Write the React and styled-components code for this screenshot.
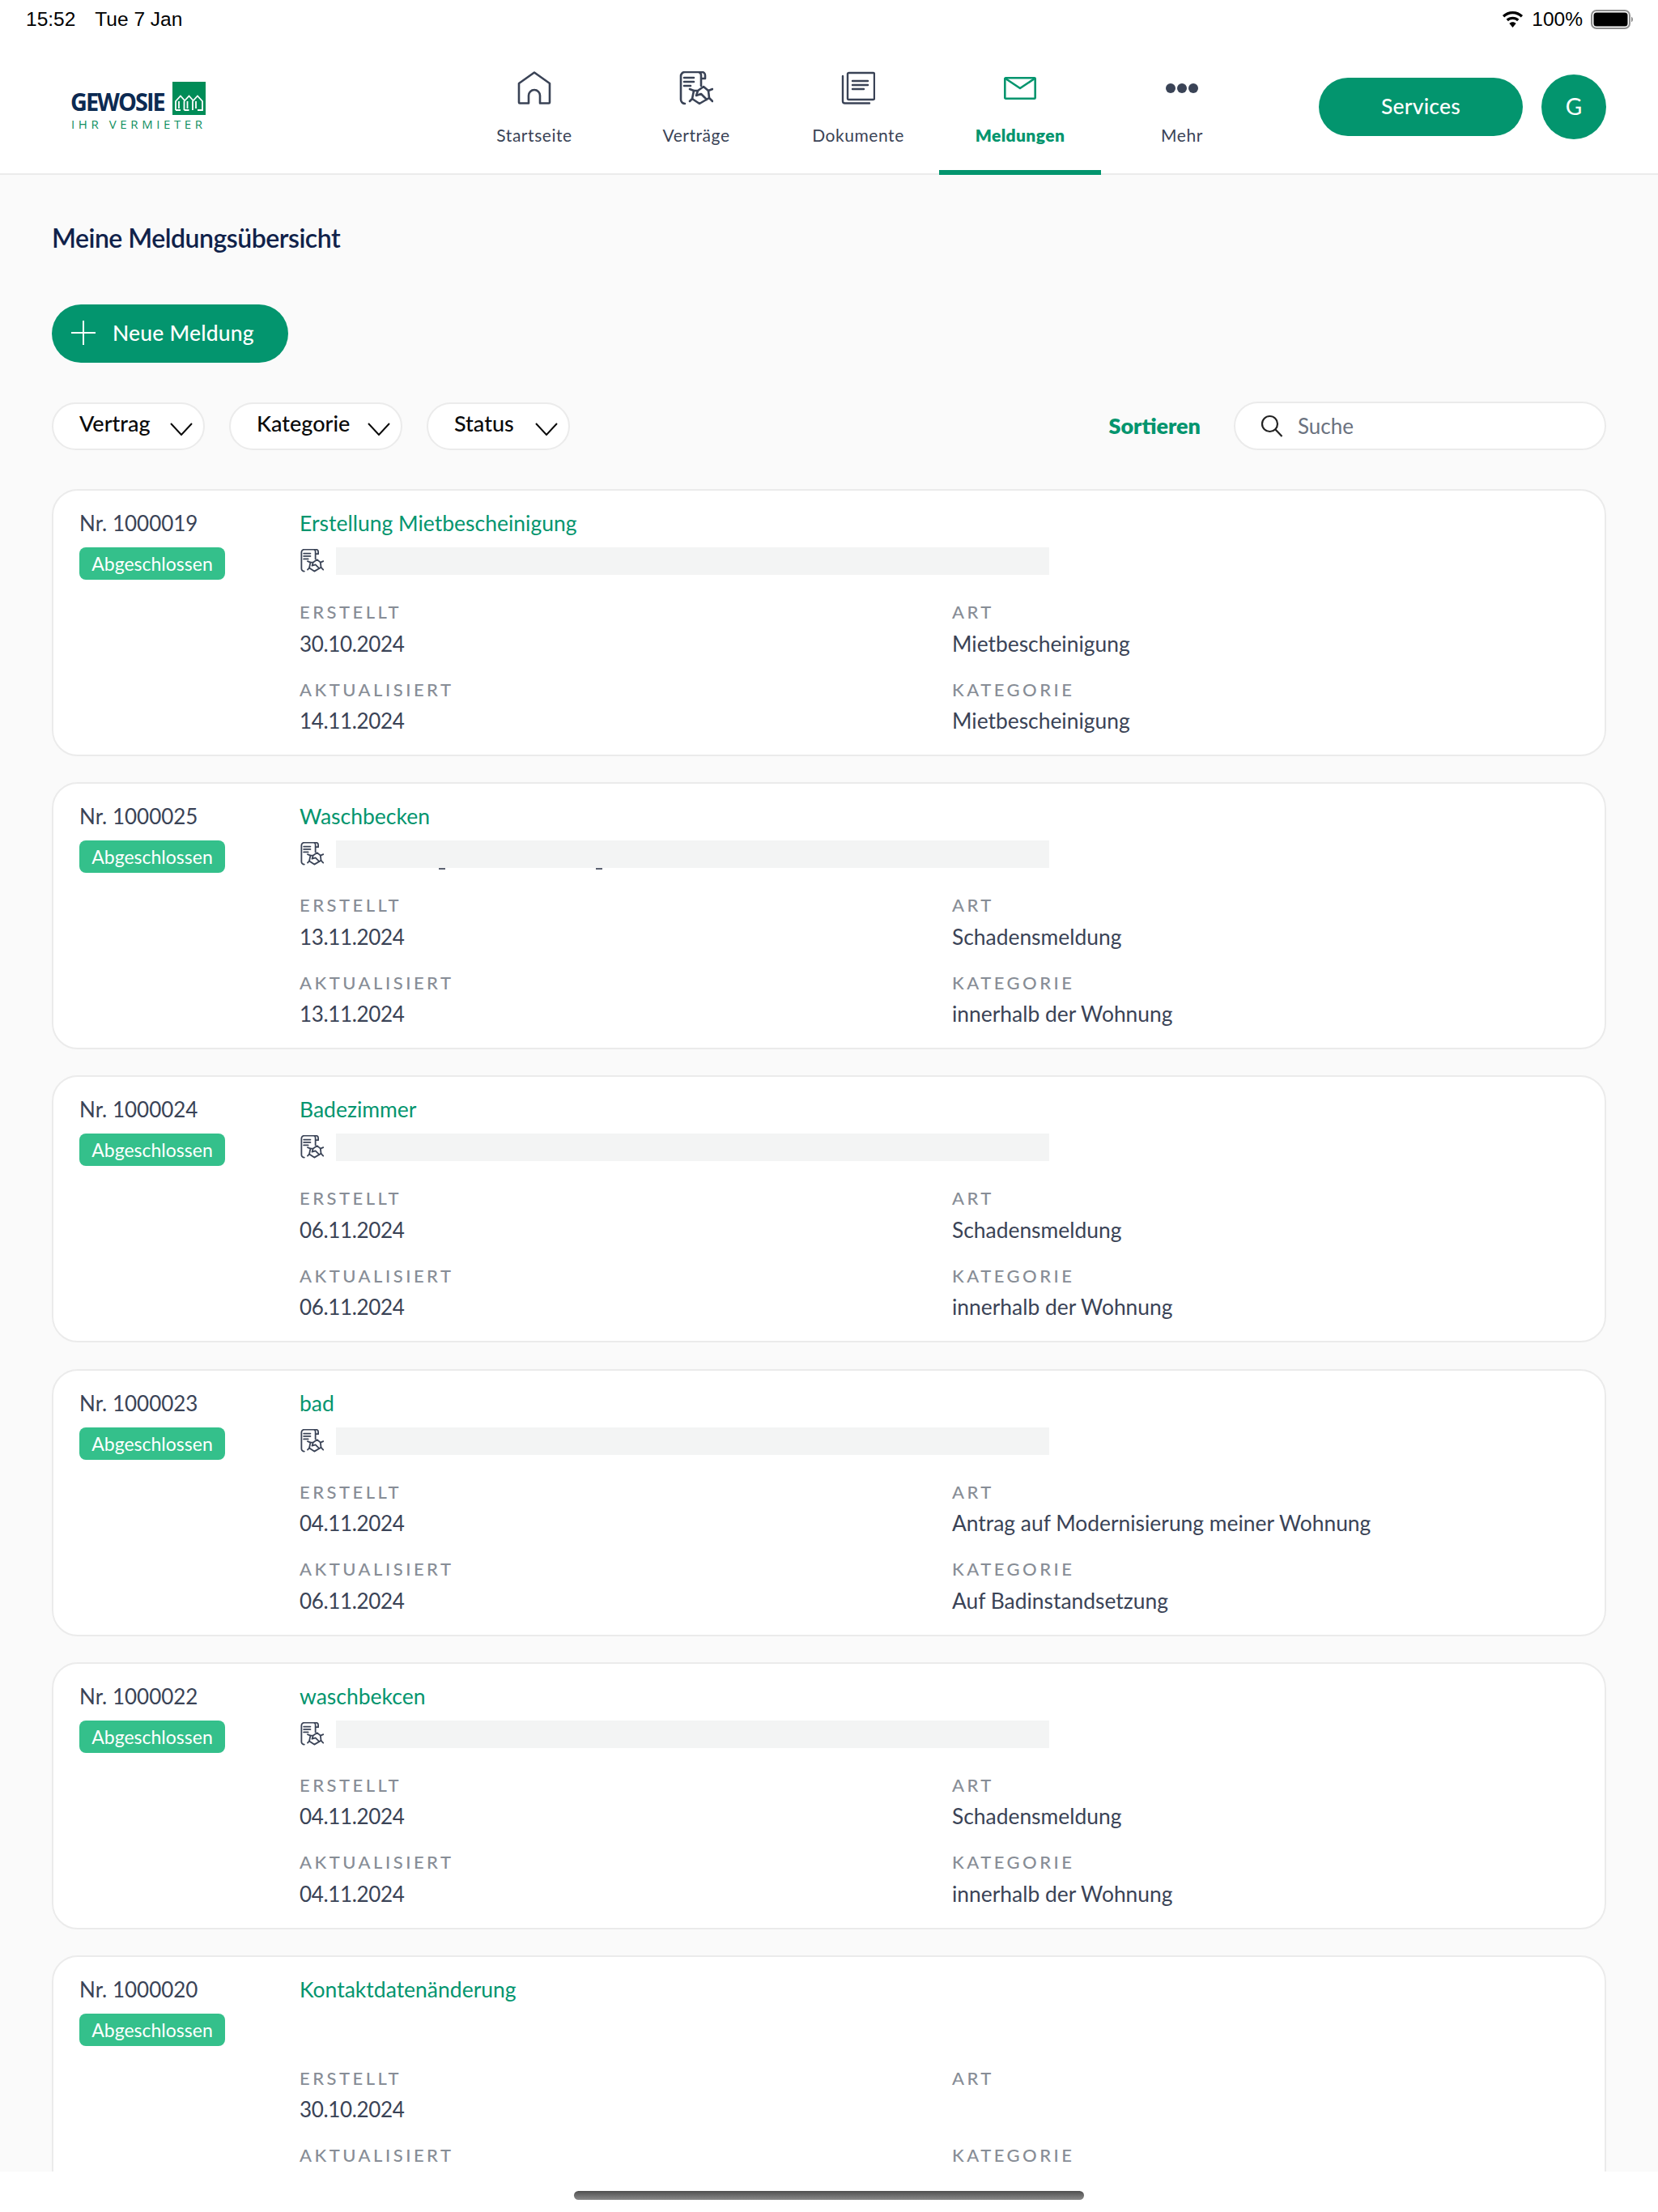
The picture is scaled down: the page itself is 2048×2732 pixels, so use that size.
import React from "react";
import styled, { createGlobalStyle } from "styled-components";

const GREEN = "#03956e";
const SLATE = "#3a4356";

const Global = createGlobalStyle`
  html, body { margin: 0; padding: 0; background: #fff; }
  * { box-sizing: border-box; }
  body { font-family: Lato, "Noto Sans", sans-serif; }
`;

const Page = styled.div`
  width: 2048px;
  height: 2732px;
  display: flex;
  flex-direction: column;
  overflow: hidden;
  background: #fff;
`;

const Top = styled.header`
  height: 216px;
  flex: none;
  background: #fff;
  border-bottom: 2px solid #ebebeb;
  display: flex;
  flex-direction: column;
`;

const StatusBar = styled.div`
  height: 48px;
  flex: none;
  padding: 0 30px 0 32px;
  display: flex;
  align-items: center;
  justify-content: space-between;
  font-family: "Liberation Sans", Arial, sans-serif;
  font-size: 24.5px;
  color: #000;
`;

const StatusLeft = styled.div`
  display: flex;
  gap: 24px;
`;

const StatusRight = styled.div`
  display: flex;
  align-items: center;
  gap: 10px;
`;

const HeaderRow = styled.div`
  flex: 1;
  display: flex;
  padding-left: 87px;
  padding-right: 64px;
  min-height: 0;
`;

const Logo = styled.div`
  width: 167px;
  margin-top: 53px;
  flex: none;
`;

const LogoTop = styled.div`
  display: flex;
  align-items: flex-end;
  justify-content: space-between;
  height: 41px;
`;

const LogoWord = styled.div`
  font-family: "Open Sans", sans-serif;
  font-weight: 700;
  font-size: 31px;
  line-height: 30px;
  letter-spacing: -2.1px;
  color: #0c2a52;
  transform: scaleX(0.93);
  transform-origin: left bottom;
  margin-bottom: 2px;
`;

const LogoSub = styled.div`
  font-family: "Open Sans", sans-serif;
  font-size: 15px;
  line-height: 16px;
  letter-spacing: 4.6px;
  padding-left: 1px;
  color: #0f8f5f;
  white-space: nowrap;
  margin-top: 3px;
`;

const Nav = styled.nav`
  width: 1000px;
  margin-left: 306px;
  flex: none;
  display: grid;
  grid-template-columns: repeat(5, 200px);
`;

const NavItem = styled.div`
  height: 168px;
  display: flex;
  flex-direction: column;
  align-items: center;
  color: ${(p) => (p.$active ? GREEN : SLATE)};
  border-bottom: 6px solid ${(p) => (p.$active ? GREEN : "transparent")};
`;

const NavIcon = styled.div`
  height: 44px;
  margin-top: 39px;
  display: flex;
  align-items: center;
  justify-content: center;
`;

const NavLabel = styled.div`
  margin-top: 23px;
  font-size: 21px;
  line-height: 26px;
  letter-spacing: ${(p) => (p.$active ? "0.4px" : "0.55px")};
  font-weight: ${(p) => (p.$active ? 800 : 400)};
`;

const HeaderActions = styled.div`
  margin-left: auto;
  display: flex;
  align-items: center;
  gap: 23px;
  height: 168px;
`;

const Pill = styled.button`
  border: 0;
  height: 72px;
  border-radius: 36px;
  background: ${GREEN};
  color: #fff;
  font-family: Lato, sans-serif;
  font-size: 26.5px;
  letter-spacing: 0.2px;
  font-weight: 500;
  display: flex;
  align-items: center;
  padding-bottom: 3px;
`;

const ServicesPill = styled(Pill)`
  width: 252px;
  justify-content: center;
`;

const NewPill = styled(Pill)`
  width: 292px;
  padding-left: 23px;
  padding-right: 0;
  gap: 20px;
`;

const Avatar = styled.div`
  width: 80px;
  height: 80px;
  border-radius: 50%;
  background: ${GREEN};
  color: #fff;
  font-size: 28px;
  padding-bottom: 2px;
  display: flex;
  align-items: center;
  justify-content: center;
`;

const Main = styled.main`
  flex: 1;
  min-height: 0;
  overflow: hidden;
  background: #fafafa;
  padding: 0 64px;
`;

const Title = styled.h1`
  margin: 59px 0 0 0;
  height: 38px;
  font-size: 32px;
  line-height: 38px;
  font-weight: 600;
  letter-spacing: -0.5px;
  color: #10224a;
`;

const NewRow = styled.div`
  margin-top: 63px;
  display: flex;
`;

const FilterRow = styled.div`
  margin-top: 48px;
  display: flex;
  align-items: center;
`;

const Chip = styled.div`
  height: 59px;
  width: ${(p) => p.$w}px;
  margin-right: 30px;
  border: 2px solid #ebebeb;
  border-radius: 30px;
  background: #fff;
  display: flex;
  padding-left: 32px;
  position: relative;
  color: #0a0a0a;
  font-size: 27px;
  line-height: 48px;
  font-weight: 500;
`;

const ChipChevron = styled.svg`
  position: absolute;
  right: 13px;
  top: 23px;
`;

const Sort = styled.div`
  margin-left: auto;
  margin-right: 41px;
  color: ${GREEN};
  font-weight: 800;
  font-size: 27px;
  line-height: 30px;
`;

const Search = styled.div`
  width: 460px;
  height: 60px;
  border: 2px solid #ebebeb;
  border-radius: 30px;
  background: #fff;
  display: flex;
  align-items: center;
  padding-left: 31px;
  gap: 18px;
  color: #6b7280;
  font-size: 26px;
`;

const List = styled.div`
  margin-top: 48px;
  display: flex;
  flex-direction: column;
  gap: 32.2px;
`;

const Card = styled.article`
  height: 330px;
  flex: none;
  border: 2px solid #ebebeb;
  border-radius: 32px;
  background: #fff;
  padding: 21px 32px 0 32px;
  display: grid;
  grid-template-columns: 272px 806px 1fr;
  grid-template-rows: 38px 51px 95.5px 95.5px;
`;

const Nr = styled.div`
  grid-column: 1;
  grid-row: 1;
  font-size: 26px;
  line-height: 38px;
  color: ${SLATE};
`;

const Badge = styled.div`
  grid-column: 1;
  grid-row: 2;
  align-self: end;
  width: 180px;
  height: 40px;
  border-radius: 8px;
  background: #34c08b;
  color: #fff;
  font-size: 23px;
  line-height: 40px;
  text-align: center;
  white-space: nowrap;
`;

const CardTitle = styled.div`
  grid-column: 2 / 4;
  grid-row: 1;
  color: ${GREEN};
  font-size: 26.5px;
  line-height: 38px;
`;

const ContractRow = styled.div`
  grid-column: 2 / 4;
  grid-row: 2;
  padding-top: 11px;
  display: flex;
  align-items: flex-start;
  gap: 15px;
`;

const ContractGlyph = styled.div`
  width: 29px;
  height: 34px;
  margin-left: 1px;
  padding-top: 2px;
  flex: none;
  display: flex;
`;

const Redacted = styled.div`
  width: 881px;
  height: 34px;
  background: #f3f4f4;
  position: relative;
`;

const Descender = styled.span`
  position: absolute;
  top: 34px;
  left: ${(p) => p.$x}px;
  width: ${(p) => p.$w}px;
  height: 2px;
  background: #5b6170;
`;

const Field = styled.div`
  grid-column: ${(p) => p.$col};
  grid-row: ${(p) => p.$row};
  padding-top: 27px;
`;

const FieldLabel = styled.div`
  font-size: 22px;
  line-height: 26px;
  letter-spacing: 3.5px;
  font-weight: 500;
  color: #878d96;
  text-transform: uppercase;
`;

const FieldValue = styled.div`
  margin-top: 9.5px;
  height: 32px;
  font-size: 26.4px;
  line-height: 32px;
  color: ${SLATE};
`;

const DateValue = styled(FieldValue)`
  font-size: 26px;
  letter-spacing: -0.35px;
`;

const Footer = styled.footer`
  height: 50px;
  flex: none;
  background: #fff;
  display: flex;
  justify-content: center;
  padding-top: 24px;
`;

const HomeBar = styled.div`
  width: 630px;
  height: 11px;
  border-radius: 6px;
  background: linear-gradient(180deg, #4f4f4f, #8a8a8a);
`;

const HomeIcon = () => (
  <svg width="42" height="42" viewBox="0 0 42 42" fill="none" stroke={SLATE} strokeWidth="2.6" strokeLinejoin="round" strokeLinecap="round">
    <path d="M21 1.5 L40 15 V38.5 a1 1 0 0 1 -1 1 H28 V30 a7 7 0 0 0 -14 0 V39.5 H3 a1 1 0 0 1 -1 -1 V15 Z" />
  </svg>
);

const ContractIcon = ({ size = 42 }) => (
  <svg width={size} height={size} viewBox="0 0 42 42" fill="none" stroke={SLATE} strokeWidth="2.6" strokeLinejoin="round" strokeLinecap="round">
    <path d="M7 40 A5 5 0 0 1 2 35 V6 A5 5 0 0 1 7 1 H28 A4 4 0 0 1 32 5 V9 H27 V5 A4 4 0 0 0 24 1 M27 9 V18" />
    <path d="M6 8 H18 M6 13 H18 M6 18 H14" />
    <path d="M13 22 L18 24 L16 34 L13 37 M41 22 L36 24 L37 33 L41 37" />
    <path d="M18 24 H23 L30 19 L36 24 M16 34 L25 40 L37 33 M23 24 L21 30 L27 28 L34 35" />
  </svg>
);

const DocsIcon = () => (
  <svg width="42" height="42" viewBox="0 0 42 42" fill="none" stroke={SLATE} strokeWidth="2.4" strokeLinejoin="round" strokeLinecap="round">
    <rect x="8" y="2" width="33" height="33" rx="1.5" />
    <path d="M2 6 V37 a2.5 2.5 0 0 0 2.5 2.5 H35" />
    <path d="M14 12 H33 M14 17 H33 M14 22 H28" />
  </svg>
);

const MailIcon = () => (
  <svg width="40" height="28" viewBox="0 0 40 28" fill="none" stroke={GREEN} strokeWidth="2.6" strokeLinejoin="round" strokeLinecap="round">
    <rect x="1.3" y="1.3" width="37.4" height="25.4" rx="1" />
    <path d="M2 2 L20 14 L38 2" />
  </svg>
);

const DotsIcon = () => (
  <svg width="42" height="14" viewBox="0 0 42 14" fill={SLATE}>
    <circle cx="7" cy="7" r="6" />
    <circle cx="21" cy="7" r="6" />
    <circle cx="35" cy="7" r="6" />
  </svg>
);

const PlusIcon = () => (
  <svg width="32" height="32" viewBox="0 0 32 32" stroke="#fff" strokeWidth="2" fill="none">
    <path d="M16 1 V31 M1 16 H31" />
  </svg>
);

const Chevron = () => (
  <ChipChevron width="28" height="16" viewBox="0 0 28 16" fill="none" stroke="#0a0a0a" strokeWidth="2">
    <path d="M1 1 L14 15 L27 1" />
  </ChipChevron>
);

const SearchIcon = () => (
  <svg width="28" height="28" viewBox="0 0 28 28" fill="none" stroke="#222" strokeWidth="2.2">
    <circle cx="11.5" cy="11.5" r="9.5" />
    <path d="M18.5 18.5 L26.5 27" />
  </svg>
);

const WifiIcon = () => (
  <svg width="27" height="20" viewBox="0 0 28 21" fill="#000">
    <path d="M14 0 C8.8 0 4.2 2 .8 5.3 L3.2 7.9 C6 5.2 9.8 3.5 14 3.5 s8 1.7 10.8 4.4 l2.4 -2.6 C23.8 2 19.2 0 14 0 Z" />
    <path d="M14 7 C10.8 7 7.9 8.2 5.7 10.3 L8.2 12.9 C9.7 11.5 11.7 10.6 14 10.6 s4.3 .9 5.8 2.3 l2.5 -2.6 C20.1 8.2 17.2 7 14 7 Z" />
    <path d="M14 14 c-1.7 0 -3.2 .6 -4.3 1.7 L14 21 l4.3 -5.3 C17.2 14.6 15.7 14 14 14 Z" />
  </svg>
);

const BatteryIcon = () => (
  <svg width="53" height="24" viewBox="0 0 53 24">
    <rect x="1" y="1" width="47" height="22" rx="6" fill="none" stroke="#8e8e8e" strokeWidth="2" />
    <rect x="3.5" y="3.5" width="42" height="17" rx="3.5" fill="#000" />
    <path d="M50 8.5 a4 4 0 0 1 0 7 Z" fill="#8e8e8e" />
  </svg>
);

const LogoMark = () => (
  <svg width="41" height="41" viewBox="0 0 41 41">
    <rect width="41" height="41" fill="#008c57" />
    <g fill="none" stroke="#fff" strokeWidth="1.8">
      <path d="M4 35 V24 L10 17.5 L15 23 M4 35 H10 M8 33 V24" />
      <path d="M14.5 35 V24 L20.5 17.5 L25.5 23 M14.5 35 H20.5 M18.5 33 V24" />
      <path d="M25 35 V24 L31 17.5 L37 24 V35 H31 M29 33 V24" />
    </g>
  </svg>
);

const navItems = [
  { label: "Startseite", icon: <HomeIcon /> },
  { label: "Verträge", icon: <ContractIcon /> },
  { label: "Dokumente", icon: <DocsIcon /> },
  { label: "Meldungen", icon: <MailIcon />, active: true },
  { label: "Mehr", icon: <DotsIcon /> },
];

const filters = [
  { label: "Vertrag", w: 189 },
  { label: "Kategorie", w: 214 },
  { label: "Status", w: 177 },
];

const cards = [
  { nr: "1000019", title: "Erstellung Mietbescheinigung", created: "30.10.2024", updated: "14.11.2024", art: "Mietbescheinigung", kat: "Mietbescheinigung", contract: true },
  { nr: "1000025", title: "Waschbecken", created: "13.11.2024", updated: "13.11.2024", art: "Schadensmeldung", kat: "innerhalb der Wohnung", contract: true, peek: true },
  { nr: "1000024", title: "Badezimmer", created: "06.11.2024", updated: "06.11.2024", art: "Schadensmeldung", kat: "innerhalb der Wohnung", contract: true },
  { nr: "1000023", title: "bad", created: "04.11.2024", updated: "06.11.2024", art: "Antrag auf Modernisierung meiner Wohnung", kat: "Auf Badinstandsetzung", contract: true },
  { nr: "1000022", title: "waschbekcen", created: "04.11.2024", updated: "04.11.2024", art: "Schadensmeldung", kat: "innerhalb der Wohnung", contract: true },
  { nr: "1000020", title: "Kontaktdatenänderung", created: "30.10.2024", updated: "", art: "", kat: "", contract: false },
];

export default function App() {
  return (
    <Page>
      <Global />
      <Top>
        <StatusBar>
          <StatusLeft>
            <span>15:52</span>
            <span>Tue 7 Jan</span>
          </StatusLeft>
          <StatusRight>
            <WifiIcon />
            <span>100%</span>
            <BatteryIcon />
          </StatusRight>
        </StatusBar>
        <HeaderRow>
          <Logo>
            <LogoTop>
              <LogoWord>GEWOSIE</LogoWord>
              <LogoMark />
            </LogoTop>
            <LogoSub>IHR VERMIETER</LogoSub>
          </Logo>
          <Nav>
            {navItems.map((n) => (
              <NavItem key={n.label} $active={n.active}>
                <NavIcon>{n.icon}</NavIcon>
                <NavLabel $active={n.active}>{n.label}</NavLabel>
              </NavItem>
            ))}
          </Nav>
          <HeaderActions>
            <ServicesPill>Services</ServicesPill>
            <Avatar>G</Avatar>
          </HeaderActions>
        </HeaderRow>
      </Top>
      <Main>
        <Title>Meine Meldungsübersicht</Title>
        <NewRow>
          <NewPill>
            <PlusIcon />
            Neue Meldung
          </NewPill>
        </NewRow>
        <FilterRow>
          {filters.map((f) => (
            <Chip key={f.label} $w={f.w}>
              {f.label}
              <Chevron />
            </Chip>
          ))}
          <Sort>Sortieren</Sort>
          <Search>
            <SearchIcon />
            Suche
          </Search>
        </FilterRow>
        <List>
          {cards.map((c) => (
            <Card key={c.nr}>
              <Nr>Nr. {c.nr}</Nr>
              <Badge>Abgeschlossen</Badge>
              <CardTitle>{c.title}</CardTitle>
              {c.contract && (
                <ContractRow>
                  <ContractGlyph>
                    <ContractIcon size={29} />
                  </ContractGlyph>
                  <Redacted>
                    {c.peek && (
                      <>
                        <Descender $x={127} $w={8} />
                        <Descender $x={321} $w={8} />
                      </>
                    )}
                  </Redacted>
                </ContractRow>
              )}
              <Field $col={2} $row={3}>
                <FieldLabel>Erstellt</FieldLabel>
                <DateValue>{c.created}</DateValue>
              </Field>
              <Field $col={3} $row={3}>
                <FieldLabel>Art</FieldLabel>
                <FieldValue>{c.art}</FieldValue>
              </Field>
              <Field $col={2} $row={4}>
                <FieldLabel>Aktualisiert</FieldLabel>
                <DateValue>{c.updated}</DateValue>
              </Field>
              <Field $col={3} $row={4}>
                <FieldLabel>Kategorie</FieldLabel>
                <FieldValue>{c.kat}</FieldValue>
              </Field>
            </Card>
          ))}
        </List>
      </Main>
      <Footer>
        <HomeBar />
      </Footer>
    </Page>
  );
}
